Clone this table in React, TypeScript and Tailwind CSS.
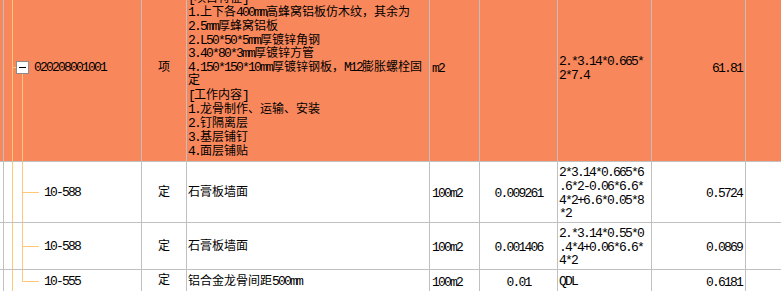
import React from "react";

const ORANGE = "bg-[#f8875c]";

// SimSun-style metrics: ASCII half width (6px), CJK full width (12px)
function T({ s }: { s: string }) {
  return (
    <>
      {s.split(/([\x20-\x7e]+)/).map((p, i) =>
        /^[\x20-\x7e]+$/.test(p) ? (
          <span key={i} className="text-[13px] leading-none tracking-[-1.8px]">{p}</span>
        ) : (
          <React.Fragment key={i}>{p}</React.Fragment>
        )
      )}
    </>
  );
}

function Lines({ lines }: { lines: string[] }) {
  return (
    <div className="flex flex-col">
      {lines.map((l, i) => (
        <div key={i} className="h-[13.9px] whitespace-nowrap">
          <T s={l} />
        </div>
      ))}
    </div>
  );
}

type Kind = "parent" | "mid" | "last";

function CodeCell({ code, kind, bg }: { code: string; kind: Kind; bg: string }) {
  return (
    <div className={`relative flex items-center pt-[3px] ${bg}`}>
      <div className="absolute left-[8px] top-0 bottom-0 w-px bg-[#ffc878]" />
      {kind === "parent" ? (
        <>
          <div className="absolute left-[9px] top-[94px] h-px w-[4px] bg-[#ffc878]" />
          <div className="absolute left-[18px] top-[101px] bottom-0 w-px bg-[#ffc878]" />
          <div className="absolute left-[12px] top-[88px] flex size-[13px] items-center justify-center border border-[#8c8c8c] bg-white">
            <div className="h-px w-[7px] bg-black" />
          </div>
          <span className="ml-[30px]"><T s={code} /></span>
        </>
      ) : (
        <>
          <div className={`absolute left-[18px] top-0 w-px bg-[#ffc878] ${kind === "last" ? "h-1/2" : "bottom-0"}`} />
          <div className="absolute left-[18px] top-1/2 h-px w-[17px] bg-[#ffc878]" />
          <span className="ml-[40px]"><T s={code} /></span>
        </>
      )}
    </div>
  );
}

type Row = {
  code: string;
  kind: Kind;
  type: string;
  desc: string[];
  unit: string;
  qty: string;
  formula: string[];
  amount: string;
  bg: string;
};

const rows: Row[] = [
  {
    code: "020208001001",
    kind: "parent",
    type: "项",
    desc: [
      "墙面装饰板",
      "[项目特征]",
      "1.上下各400mm高蜂窝铝板仿木纹，其余为",
      "2.5mm厚蜂窝铝板",
      "2.L50*50*5mm厚镀锌角钢",
      "3.40*80*3mm厚镀锌方管",
      "4.150*150*10mm厚镀锌钢板，M12膨胀螺栓固",
      "定",
      "[工作内容]",
      "1.龙骨制作、运输、安装",
      "2.钉隔离层",
      "3.基层铺钉",
      "4.面层铺贴",
    ],
    unit: "m2",
    qty: "",
    formula: ["2.*3.14*0.665*", "2*7.4"],
    amount: "61.81",
    bg: ORANGE,
  },
  {
    code: "10-588",
    kind: "mid",
    type: "定",
    desc: ["石膏板墙面"],
    unit: "100m2",
    qty: "0.009261",
    formula: ["2*3.14*0.665*6", ".6*2-0.06*6.6*", "4*2+6.6*0.05*8", "*2"],
    amount: "0.5724",
    bg: "bg-white",
  },
  {
    code: "10-588",
    kind: "mid",
    type: "定",
    desc: ["石膏板墙面"],
    unit: "100m2",
    qty: "0.001406",
    formula: ["2.*3.14*0.55*0", ".4*4+0.06*6.6*", "4*2"],
    amount: "0.0869",
    bg: "bg-white",
  },
  {
    code: "10-555",
    kind: "last",
    type: "定",
    desc: ["铝合金龙骨间距500mm"],
    unit: "100m2",
    qty: "0.01",
    formula: ["QDL"],
    amount: "0.6181",
    bg: "bg-white",
  },
];

export default function App() {
  return (
    <div className="h-[291px] w-[781px] overflow-hidden bg-white font-['Liberation_Mono','Noto_Sans_CJK_SC',monospace] text-[12px] leading-[13.9px] text-black">
      <div className="-mt-[27px] grid grid-cols-[3px_137px_44px_242px_49px_77px_93px_93px_35px] grid-rows-[188px_60px_46px_21px] gap-px bg-[#c0c0c0]">
        {rows.map((r, i) => (
          <React.Fragment key={i}>
            <div className={r.bg} />
            <CodeCell code={r.code} kind={r.kind} bg={r.bg} />
            <div className={`flex items-center justify-center pt-[3px] ${r.bg}`}>{r.type}</div>
            <div className={`flex pl-[1px] ${r.kind === "parent" ? "items-start pt-[5px]" : "items-center pt-[3px]"} ${r.bg}`}>
              <Lines lines={r.desc} />
            </div>
            <div className={`flex items-center pl-[2px] pt-[3px] ${r.bg}`}>
              <T s={r.unit} />
            </div>
            <div className={`flex items-center justify-center pt-[3px] ${r.bg}`}>
              <T s={r.qty} />
            </div>
            <div className={`flex items-center pl-[1px] pt-[3px] ${r.bg}`}>
              <Lines lines={r.formula} />
            </div>
            <div className={`flex items-center justify-end pr-[3px] pt-[3px] ${r.bg}`}>
              <T s={r.amount} />
            </div>
            <div className={r.bg} />
          </React.Fragment>
        ))}
      </div>
    </div>
  );
}
